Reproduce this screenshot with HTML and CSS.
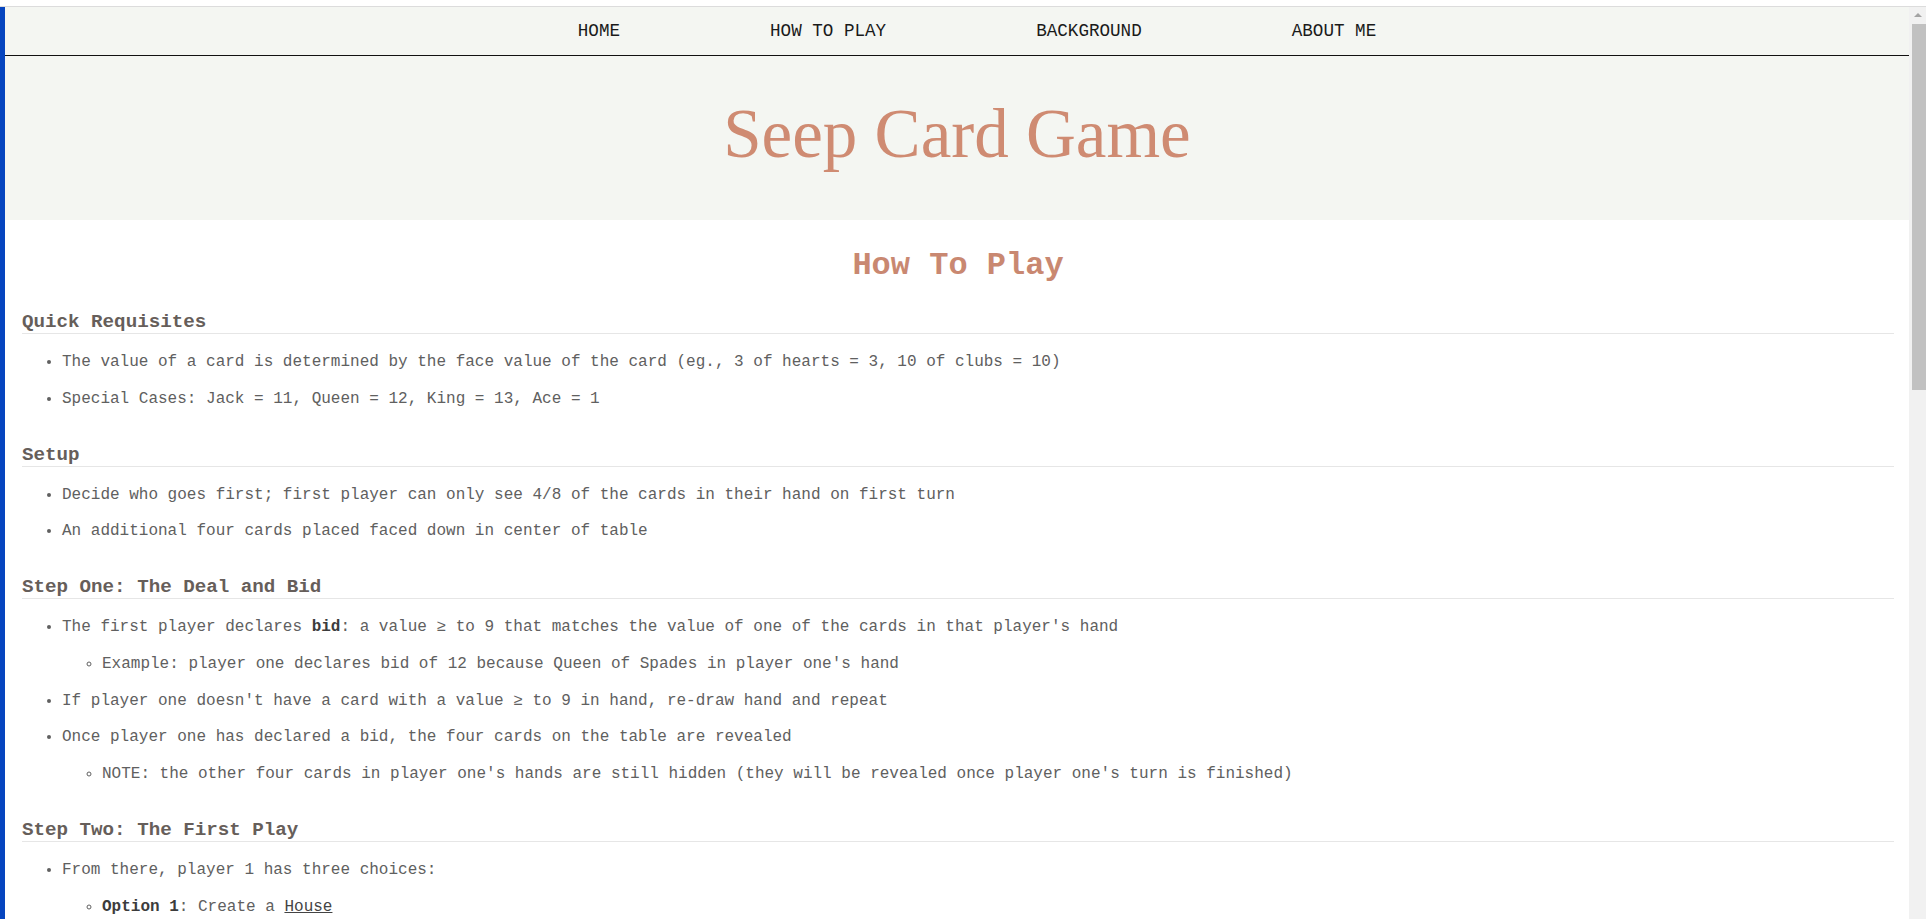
FILE: index.html
```html
<!DOCTYPE html>
<html lang="en">
<head>
<meta charset="utf-8">
<title>Seep Card Game - How To Play</title>
<link rel="stylesheet" href="styles.css">
</head>
<body>
<div class="topstrip"></div>
<div class="frame">
  <div class="edge"></div>
  <div class="page">
    <header class="site-header">
      <nav class="nav">
        <ul class="nav-list">
          <li><a href="#">HOME</a></li>
          <li><a href="#">HOW TO PLAY</a></li>
          <li><a href="#">BACKGROUND</a></li>
          <li><a href="#">ABOUT ME</a></li>
        </ul>
      </nav>
      <div class="hero">
        <h1 class="site-title">Seep Card Game</h1>
      </div>
    </header>
    <main class="content">
      <h1 class="page-title">How To Play</h1>

      <section class="rules">
        <h2 class="rules-title">Quick Requisites</h2>
        <ul class="rules-list">
          <li>The value of a card is determined by the face value of the card (eg., 3 of hearts = 3, 10 of clubs = 10)</li>
          <li>Special Cases: Jack = 11, Queen = 12, King = 13, Ace = 1</li>
        </ul>
      </section>

      <section class="rules">
        <h2 class="rules-title">Setup</h2>
        <ul class="rules-list">
          <li>Decide who goes first; first player can only see 4/8 of the cards in their hand on first turn</li>
          <li>An additional four cards placed faced down in center of table</li>
        </ul>
      </section>

      <section class="rules">
        <h2 class="rules-title">Step One: The Deal and Bid</h2>
        <ul class="rules-list">
          <li>The first player declares <b>bid</b>: a value ≥ to 9 that matches the value of one of the cards in that player's hand
            <ul class="sub-list">
              <li>Example: player one declares bid of 12 because Queen of Spades in player one's hand</li>
            </ul>
          </li>
          <li>If player one doesn't have a card with a value ≥ to 9 in hand, re-draw hand and repeat</li>
          <li>Once player one has declared a bid, the four cards on the table are revealed
            <ul class="sub-list">
              <li>NOTE: the other four cards in player one's hands are still hidden (they will be revealed once player one's turn is finished)</li>
            </ul>
          </li>
        </ul>
      </section>

      <section class="rules">
        <h2 class="rules-title">Step Two: The First Play</h2>
        <ul class="rules-list">
          <li>From there, player 1 has three choices:
            <ul class="sub-list">
              <li><b>Option 1</b>: Create a <a class="term" href="#">House</a></li>
            </ul>
          </li>
        </ul>
      </section>
    </main>
  </div>
  <div class="scrollbar">
    <div class="scroll-arrow"></div>
    <div class="scroll-thumb"></div>
  </div>
</div>
</body>
</html>
```

FILE: styles.css
```css
html, body {
  margin: 0;
  padding: 0;
  height: 100%;
  overflow: hidden;
  background: #ffffff;
}

body {
  display: flex;
  flex-direction: column;
  font-family: "Liberation Mono", "Courier New", monospace;
  font-size: 16px;
  color: #606060;
}

.topstrip {
  height: 6px;
  flex: none;
  background: #ffffff;
  border-bottom: 1px solid #dcdcdc;
}

.frame {
  flex: 1;
  display: flex;
  min-height: 0;
}

.edge {
  width: 5px;
  flex: none;
  background: #0645bf;
}

.page {
  flex: 1;
  min-width: 0;
  overflow: hidden;
}

/* header */
.site-header {
  background: #f4f6f2;
}

.nav {
  border-bottom: 1px solid #111111;
}

.nav-list {
  list-style: none;
  margin: 0;
  padding: 0 0 0 40px;
  display: flex;
  justify-content: center;
  gap: 150px;
  height: 48px;
  line-height: 48px;
  font-size: 17.6px;
}

.nav-list a {
  color: #1a1a1a;
  text-decoration: none;
}

.hero {
  padding: 44px 0 51px;
  text-align: center;
}

.site-title {
  margin: 0;
  font-family: "Liberation Serif", "Times New Roman", serif;
  font-weight: normal;
  font-size: 69px;
  line-height: 69px;
  color: #cf8b72;
}

/* content */
.content {
  padding: 27px 15px 40px 17px;
}

.page-title {
  margin: 0 0 27px;
  text-align: center;
  font-size: 32px;
  font-weight: bold;
  color: #c98871;
}

.rules + .rules {
  padding-top: 17px;
}

.rules-title {
  margin: 0;
  font-size: 19.2px;
  font-weight: bold;
  color: #665e5a;
  border-bottom: 1px solid #e6e6e6;
}

.rules-list {
  margin: 16px 0;
  padding-left: 40px;
  list-style: disc;
}

.rules-list li {
  line-height: 24px;
}

.rules-list li + li {
  margin-top: 12.7px;
}

.sub-list {
  margin: 12.7px 0 0;
  padding-left: 40px;
  list-style: circle;
}

.rules-list b {
  color: #3c3c3c;
}

.term {
  color: #444444;
  text-decoration: underline;
}

/* scrollbar */
.scrollbar {
  width: 17px;
  flex: none;
  background: #f1f1f1;
  display: flex;
  flex-direction: column;
  align-items: flex-end;
}

.scroll-arrow {
  width: 17px;
  height: 17px;
  position: relative;
}

.scroll-arrow::after {
  content: "";
  position: absolute;
  left: 5px;
  top: 6px;
  border-left: 4px solid transparent;
  border-right: 4px solid transparent;
  border-bottom: 4px solid #a3a3a3;
}

.scroll-thumb {
  width: 14px;
  height: 366px;
  background: #c1c1c1;
}
```
